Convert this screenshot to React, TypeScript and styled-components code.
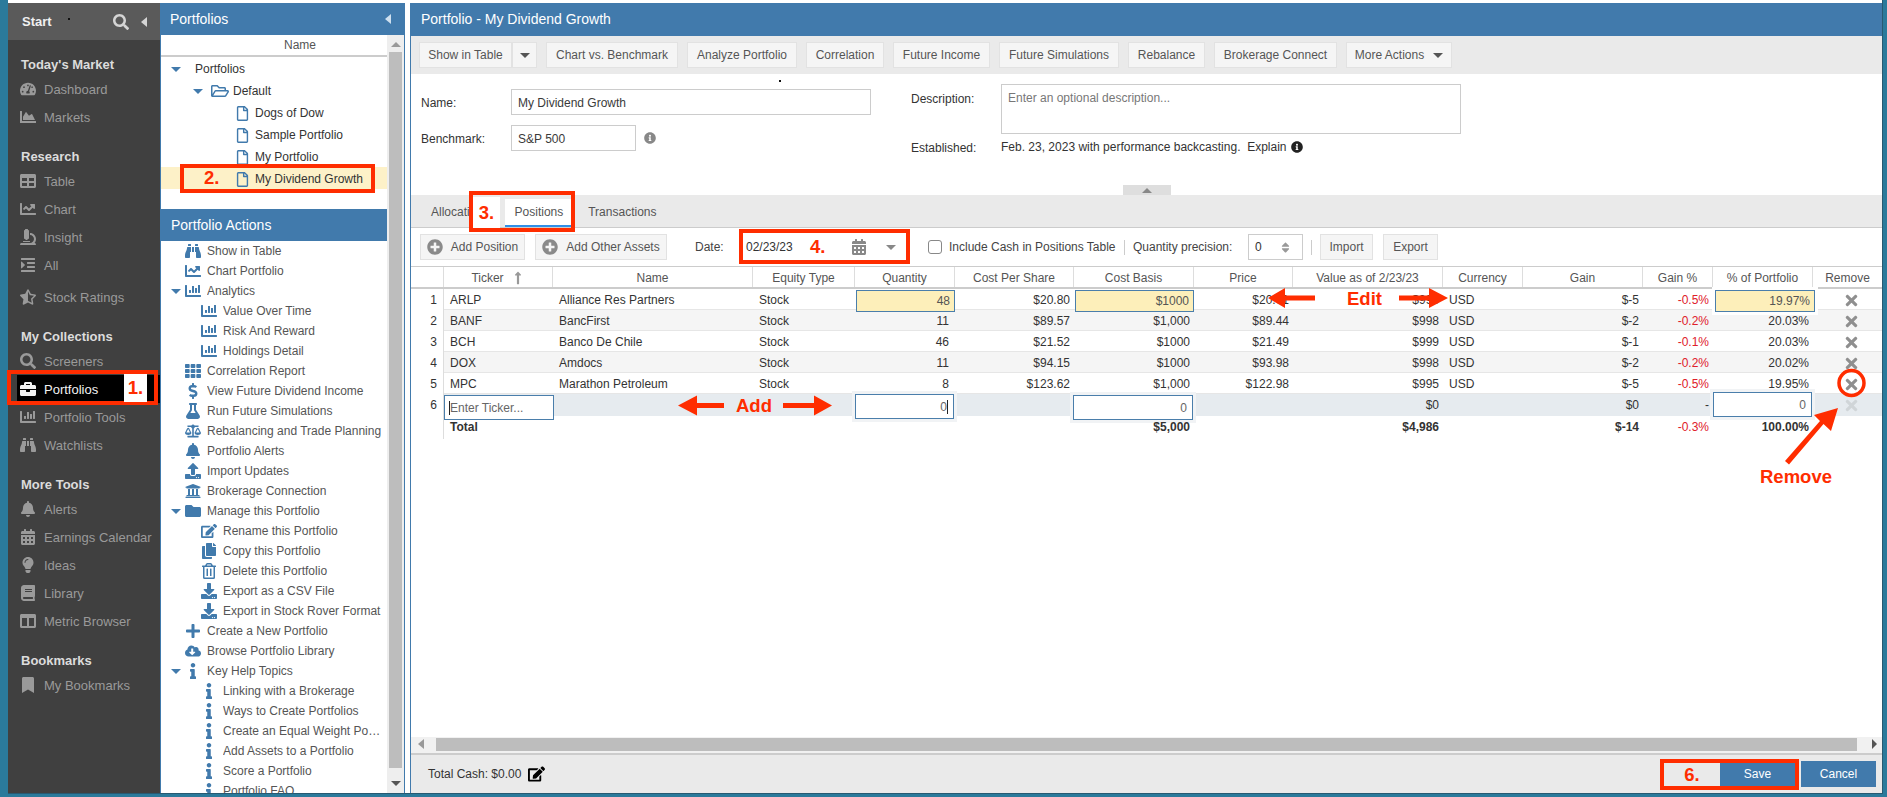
import React from "react";
import styled, { createGlobalStyle } from "styled-components";
import {
  FaBalanceScale,
  FaBell,
  FaBinoculars,
  FaBook,
  FaBookmark,
  FaBriefcase,
  FaCalendarAlt,
  FaChartArea,
  FaChartBar,
  FaChartLine,
  FaCloudDownloadAlt,
  FaColumns,
  FaCopy,
  FaDollarSign,
  FaDownload,
  FaEdit,
  FaFlask,
  FaFolder,
  FaIndent,
  FaInfo,
  FaInfoCircle,
  FaLightbulb,
  FaLongArrowAltUp,
  FaMicroscope,
  FaPlus,
  FaPlusCircle,
  FaRegFile,
  FaRegFolderOpen,
  FaRegTrashAlt,
  FaSearch,
  FaSort,
  FaStarHalfAlt,
  FaTable,
  FaTh,
  FaTachometerAlt,
  FaTimes,
  FaUniversity,
  FaUpload,
} from "react-icons/fa";

const BLUE = "#417aac";
const RED = "#ff2d00";

const GlobalStyle = createGlobalStyle`
  html, body {
    margin: 0;
    padding: 0;
    background: #2b7a9b;
  }
  * {
    box-sizing: border-box;
  }
`;

const Page = styled.div`
  position: relative;
  width: 1887px;
  height: 797px;
  overflow: hidden;
  background: #2b7a9b;
  font-family: "Liberation Sans", Arial, sans-serif;
  font-size: 12px;
  color: #333;
`;

const Frame = styled.div`
  display: flex;
  width: 1875px;
  height: 794px;
  margin-left: 8px;
  padding-top: 3px;
  background: #fff;
  border-right: 1px solid #285a72;
  border-bottom: 1px solid #285a72;
`;

/* left nav */
const Sidebar = styled.nav`
  width: 152px;
  flex: none;
  background: #404040;
`;

const SideHead = styled.div`
  display: flex;
  align-items: center;
  height: 37px;
  padding: 0 13px 0 14px;
  background: #5a5a5a;
  color: #f0f0f0;
  font-size: 13px;
  font-weight: bold;
  span {
    flex: 1;
  }
  svg {
    color: #d5d5d5;
  }
`;

const CaretLeft = styled.i<{ $color: string }>`
  display: block;
  width: 0;
  height: 0;
  margin-left: 12px;
  border-top: 5px solid transparent;
  border-bottom: 5px solid transparent;
  border-right: 6px solid ${(p) => p.$color};
`;

const SideBody = styled.div`
  padding-top: 13px;
`;

const SideSection = styled.section`
  margin-bottom: 14px;
`;

const SideTitle = styled.h3`
  height: 22px;
  margin: 0;
  padding-left: 13px;
  color: #dcdcdc;
  font-size: 13px;
  line-height: 23px;
`;

const SideItem = styled.div<{ $active?: boolean; $gapTop?: boolean }>`
  display: flex;
  align-items: center;
  height: 28px;
  margin-top: ${(p) => (p.$gapTop ? "4px" : "0")};
  margin-left: ${(p) => (p.$active ? "9px" : "0")};
  padding-left: ${(p) => (p.$active ? "3px" : "12px")};
  background: ${(p) => (p.$active ? "#000" : "transparent")};
  color: ${(p) => (p.$active ? "#f2f2f2" : "#9a9a9a")};
  font-size: 13px;
  svg {
    width: 16px;
    height: 16px;
    flex: none;
    margin-right: 8px;
  }
`;

/* tree panel */
const TreePanel = styled.aside`
  display: flex;
  flex-direction: column;
  width: 245px;
  flex: none;
  margin-right: 5px;
  border-left: 1px solid ${BLUE};
  border-right: 1px solid ${BLUE};
`;

const PanelTitle = styled.div`
  display: flex;
  align-items: center;
  justify-content: space-between;
  flex: none;
  height: 32px;
  padding: 0 14px 0 10px;
  background: ${BLUE};
  color: #fff;
  font-size: 14px;
`;

const PanelTitleLeft = styled(PanelTitle)`
  margin-left: -1px;
  margin-right: -1px;
`;

const TreeBody = styled.div`
  display: flex;
  flex: 1;
  min-height: 0;
`;

const TreeScroll = styled.div`
  flex: 1;
  min-width: 0;
  overflow: hidden;
`;

const NameHead = styled.div`
  height: 22px;
  padding-left: 52px;
  border-bottom: 2px solid #ccc;
  color: #555;
  line-height: 20px;
  text-align: center;
`;

const TreeRow = styled.div<{ $indent: number; $selected?: boolean }>`
  display: flex;
  align-items: center;
  height: 22px;
  padding-top: 2px;
  padding-left: ${(p) => p.$indent}px;
  background: ${(p) => (p.$selected ? "#fdf1c8" : "transparent")};
  color: #333;
`;

const Slot = styled.span<{ $w: number }>`
  display: flex;
  align-items: center;
  flex: none;
  width: ${(p) => p.$w}px;
  color: ${BLUE};
`;

const TreeArrow = styled.i`
  display: block;
  width: 0;
  height: 0;
  border-left: 5px solid transparent;
  border-right: 5px solid transparent;
  border-top: 5px solid ${BLUE};
`;

const ActionList = styled.div`
  margin-top: 20px;
`;

const ActionRow = styled.div<{ $level: number }>`
  display: flex;
  align-items: center;
  height: 20px;
  padding-left: ${(p) => 10 + p.$level * 16}px;
  color: #555;
  white-space: nowrap;
  span.label {
    width: ${(p) => (p.$level ? 160 : 176)}px;
    overflow: hidden;
    text-overflow: ellipsis;
  }
`;

const ActionIcon = styled.span`
  display: flex;
  align-items: center;
  justify-content: center;
  flex: none;
  width: 16px;
  height: 16px;
  margin-right: 6px;
  color: ${BLUE};
  svg {
    width: 16px;
    height: 16px;
  }
`;

const VScroll = styled.div`
  display: flex;
  flex-direction: column;
  align-items: center;
  width: 17px;
  flex: none;
  background: #eeeeee;
`;

const VThumb = styled.div`
  width: 13px;
  height: 716px;
  background: #bdbdbd;
`;

const ArrowUp = styled.i<{ $color: string; $my?: string }>`
  display: block;
  width: 0;
  height: 0;
  margin: ${(p) => p.$my || "0"};
  border-left: 5px solid transparent;
  border-right: 5px solid transparent;
  border-bottom: 5px solid ${(p) => p.$color};
`;

const ArrowDown = styled.i<{ $color: string; $my?: string }>`
  display: block;
  width: 0;
  height: 0;
  margin: ${(p) => p.$my || "0"};
  border-left: 5px solid transparent;
  border-right: 5px solid transparent;
  border-top: 5px solid ${(p) => p.$color};
`;

/* main panel */
const Main = styled.main`
  display: flex;
  flex-direction: column;
  flex: 1;
  min-width: 0;
  border-left: 1px solid ${BLUE};
`;

const MainTitle = styled.div`
  flex: none;
  height: 33px;
  margin-left: -1px;
  padding-left: 11px;
  background: ${BLUE};
  color: #fff;
  font-size: 14px;
  line-height: 33px;
`;

const ActionBar = styled.div`
  display: flex;
  align-items: center;
  flex: none;
  gap: 9px;
  height: 38px;
  padding-left: 8px;
  background: #eaeaea;
`;

const BarGroup = styled.div`
  display: flex;
`;

const Btn = styled.button<{ $ml?: number; $w: number }>`
  display: flex;
  align-items: center;
  justify-content: center;
  flex: none;
  width: ${(p) => p.$w}px;
  height: 26px;
  margin-left: ${(p) => p.$ml || 0}px;
  padding: 0;
  background: #f5f5f5;
  border: 1px solid #e2e2e2;
  color: #555;
  font: inherit;
  white-space: nowrap;
`;

const Form = styled.div`
  position: relative;
  display: flex;
  flex: none;
  height: 121px;
  padding-left: 10px;
`;

const FormLeft = styled.div`
  width: 490px;
  flex: none;
  padding-top: 15px;
`;

const FormRow = styled.div`
  display: flex;
  align-items: center;
  height: 26px;
  margin-bottom: 10px;
`;

const FormLabel = styled.label<{ $w: number }>`
  flex: none;
  width: ${(p) => p.$w}px;
  padding-top: 2px;
  color: #333;
`;

const TextField = styled.div<{ $w: number }>`
  display: flex;
  align-items: center;
  flex: none;
  width: ${(p) => p.$w}px;
  height: 26px;
  padding: 2px 0 0 6px;
  border: 1px solid #ccc;
  color: #3a3a3a;
`;

const FormRight = styled.div`
  padding-top: 10px;
`;

const DescRow = styled.div`
  display: flex;
  height: 50px;
  margin-bottom: 5px;
  line-height: 26px;
`;

const DescBox = styled.div`
  width: 460px;
  height: 50px;
  padding: 0 6px;
  border: 1px solid #ccc;
  color: #777;
  line-height: 26px;
`;

const EstablishedRow = styled.div`
  display: flex;
  align-items: center;
  height: 16px;
  margin-top: 1px;
`;

const InfoIcon = styled(FaInfoCircle)<{ $color: string; $ml: number }>`
  width: 12px;
  height: 12px;
  margin-left: ${(p) => p.$ml}px;
  color: ${(p) => p.$color};
`;

const CollapseTab = styled.div`
  position: absolute;
  left: 712px;
  bottom: 0;
  display: flex;
  align-items: center;
  justify-content: center;
  width: 48px;
  height: 10px;
  background: #dedede;
`;

const TabBar = styled.div`
  display: flex;
  align-items: flex-end;
  flex: none;
  gap: 5px;
  height: 33px;
  padding-left: 10px;
  background: #eaeaea;
  border-bottom: 1px solid #ccc;
`;

const Tab = styled.div<{ $active?: boolean; $mr?: number }>`
  height: 28px;
  margin-right: ${(p) => p.$mr || 0}px;
  padding: 0 10px;
  background: ${(p) => (p.$active ? "#fff" : "transparent")};
  border-bottom: 2px solid ${(p) => (p.$active ? "#2f8fe8" : "transparent")};
  color: #555;
  line-height: 26px;
`;

const PosBar = styled.div`
  display: flex;
  align-items: center;
  flex: none;
  height: 38px;
  padding-left: 9px;
`;

const PlusIcon = styled(FaPlusCircle)`
  width: 16px;
  height: 16px;
  margin-right: 8px;
  color: #8a8a8a;
`;

const PlainText = styled.span<{ $ml?: number; $w?: number }>`
  flex: none;
  width: ${(p) => (p.$w ? `${p.$w}px` : "auto")};
  margin-left: ${(p) => p.$ml || 0}px;
  color: #444;
  white-space: nowrap;
`;

const DateField = styled.div`
  display: flex;
  align-items: center;
  flex: none;
  width: 173px;
  height: 26px;
  margin-left: 10px;
  padding-left: 13px;
  color: #333;
  svg {
    width: 14px;
    height: 16px;
    margin-left: 59px;
    color: #888;
  }
`;

const Check = styled.i`
  display: block;
  flex: none;
  width: 14px;
  height: 14px;
  margin-left: 22px;
  border: 1px solid #888;
  border-radius: 3px;
`;

const BarSep = styled.i<{ $ml: number; $mr: number }>`
  display: block;
  flex: none;
  width: 1px;
  height: 15px;
  margin: 0 ${(p) => p.$mr}px 0 ${(p) => p.$ml}px;
  background: #ccc;
`;

const Spinner = styled.div`
  display: flex;
  align-items: center;
  justify-content: space-between;
  flex: none;
  width: 55px;
  height: 26px;
  margin-left: 16px;
  padding: 0 10px 0 6px;
  border: 1px solid #ccc;
  color: #333;
  svg {
    color: #999;
    font-size: 13px;
  }
`;

/* positions table */
const TableArea = styled.div`
  flex: 1;
  min-height: 0;
`;

const COLS = "33px 109px 200px 102px 100px 119px 120px 99px 150px 80px 120px 70px 100px 69px";

const HeadRow = styled.div`
  display: grid;
  grid-template-columns: ${COLS};
  height: 23px;
  border-top: 1px solid #ccc;
  border-bottom: 2px solid #ccc;
`;

const HeadCell = styled.div`
  display: flex;
  align-items: center;
  justify-content: center;
  padding-top: 2px;
  border-right: 1px solid #ddd;
  color: #555;
  svg {
    margin-left: 7px;
    color: #999;
    font-size: 14px;
  }
  &:last-child {
    border-right: none;
  }
`;

const BodyRow = styled.div<{ $bg: string; $h?: number }>`
  display: grid;
  grid-template-columns: ${COLS};
  height: ${(p) => p.$h || 21}px;
  background: ${(p) => p.$bg};
  border-bottom: ${(p) => (p.$h === 22 ? "none" : "1px solid #e6e6e6")};
`;

const IndexCell = styled.div`
  padding-right: 6px;
  background: #fff;
  border-right: 1px solid #ddd;
  color: #333;
  line-height: 23px;
  text-align: right;
`;

const Cell = styled.div<{
  $right?: boolean;
  $pr?: number;
  $color?: string;
  $bold?: boolean;
}>`
  position: relative;
  padding: ${(p) => (p.$right ? `0 ${p.$pr ?? 4}px 0 0` : "0 0 0 6px")};
  color: ${(p) => p.$color || "#333"};
  font-weight: ${(p) => (p.$bold ? "bold" : "normal")};
  line-height: 23px;
  text-align: ${(p) => (p.$right ? "right" : "left")};
`;

const EditedValue = styled.div<{ $halo?: boolean }>`
  position: absolute;
  top: 1px;
  left: ${(p) => (p.$halo ? 2 : 1)}px;
  right: ${(p) => (p.$halo ? -2 : 0)}px;
  bottom: 0;
  padding-right: 4px;
  background: #fdefba;
  border: 1px solid #4a7eab;
  box-shadow: ${(p) => (p.$halo ? "0 0 0 3px #fff" : "none")};
  color: #555;
  line-height: 20px;
  text-align: right;
`;

const CellInput = styled.div<{ $top: number; $left: number; $right: number; $alignLeft?: boolean }>`
  position: absolute;
  top: ${(p) => p.$top}px;
  left: ${(p) => p.$left}px;
  right: ${(p) => p.$right}px;
  height: 25px;
  padding: ${(p) => (p.$alignLeft ? "0 0 0 4px" : "0 5px 0 0")};
  background: #fff;
  border: 1px solid #4a7eab;
  box-shadow: ${(p) => (p.$alignLeft ? "none" : "0 0 0 3px #f1f3f5")};
  color: #666;
  line-height: 25px;
  text-align: ${(p) => (p.$alignLeft ? "left" : "right")};
`;

const TextCaret = styled.i`
  display: inline-block;
  width: 1px;
  height: 14px;
  background: #222;
  vertical-align: -3px;
`;

const RemoveCell = styled.div<{ $faded?: boolean }>`
  display: flex;
  align-items: center;
  justify-content: center;
  padding-left: 7px;
  color: ${(p) => (p.$faded ? "#d0d5d8" : "#8f8f8f")};
  svg {
    width: 15px;
    height: 17px;
  }
`;

const HScroll = styled.div`
  display: flex;
  align-items: center;
  flex: none;
  height: 18px;
  padding: 0 5px 2px 7px;
  background: #f1f1f1;
  border-bottom: 2px solid #ccc;
`;

const HThumb = styled.div`
  flex: 1;
  height: 13px;
  margin: 0 15px 0 12px;
  background: #bdbdbd;
`;

const ArrowRight = styled.i`
  display: block;
  width: 0;
  height: 0;
  border-top: 5px solid transparent;
  border-bottom: 5px solid transparent;
  border-left: 5px solid #555;
`;

const Footer = styled.div`
  display: flex;
  align-items: center;
  justify-content: space-between;
  flex: none;
  height: 38px;
  padding: 0 6px 0 17px;
  background: #eaeaea;
`;

const CashInfo = styled.div`
  display: flex;
  align-items: center;
  color: #333;
  svg {
    width: 17px;
    height: 16px;
    margin-left: 7px;
    color: #000;
  }
`;

const FooterBtns = styled.div`
  display: flex;
  gap: 6px;
`;

const PrimaryBtn = styled.button`
  width: 75px;
  height: 26px;
  background: ${BLUE};
  border: none;
  color: #fff;
  font: inherit;
`;

/* red marks drawn on top of the screenshot */
const RedBox = styled.div<{ $x: number; $y: number; $w: number; $h: number }>`
  position: absolute;
  left: ${(p) => p.$x}px;
  top: ${(p) => p.$y}px;
  width: ${(p) => p.$w}px;
  height: ${(p) => p.$h}px;
  border: 4px solid ${RED};
`;

const RedText = styled.div<{ $x: number; $y: number; $bg?: string; $w?: number; $h?: number }>`
  position: absolute;
  left: ${(p) => p.$x}px;
  top: ${(p) => p.$y}px;
  width: ${(p) => (p.$w ? `${p.$w}px` : "auto")};
  height: ${(p) => (p.$h ? `${p.$h}px` : "auto")};
  background: ${(p) => p.$bg || "transparent"};
  color: ${RED};
  font-size: 18.5px;
  font-weight: bold;
  line-height: ${(p) => (p.$h ? `${p.$h}px` : "22px")};
  text-align: ${(p) => (p.$w ? "center" : "left")};
  white-space: nowrap;
`;

const MarkLayer = styled.svg`
  position: absolute;
  inset: 0;
  pointer-events: none;
`;

const Speck = styled.i<{ $x: number; $y: number }>`
  position: absolute;
  left: ${(p) => p.$x}px;
  top: ${(p) => p.$y}px;
  width: 2px;
  height: 2px;
  background: #111;
`;

const sections = [
  {
    title: "Today's Market",
    items: [
      { label: "Dashboard", icon: <FaTachometerAlt /> },
      { label: "Markets", icon: <FaChartArea /> },
    ],
  },
  {
    title: "Research",
    items: [
      { label: "Table", icon: <FaTable /> },
      { label: "Chart", icon: <FaChartLine /> },
      { label: "Insight", icon: <FaMicroscope /> },
      { label: "All", icon: <FaIndent /> },
      { label: "Stock Ratings", icon: <FaStarHalfAlt />, gapTop: true },
    ],
  },
  {
    title: "My Collections",
    items: [
      { label: "Screeners", icon: <FaSearch /> },
      { label: "Portfolios", icon: <FaBriefcase />, active: true },
      { label: "Portfolio Tools", icon: <FaChartBar /> },
      { label: "Watchlists", icon: <FaBinoculars /> },
    ],
  },
  {
    title: "More Tools",
    items: [
      { label: "Alerts", icon: <FaBell /> },
      { label: "Earnings Calendar", icon: <FaCalendarAlt /> },
      { label: "Ideas", icon: <FaLightbulb /> },
      { label: "Library", icon: <FaBook /> },
      { label: "Metric Browser", icon: <FaColumns /> },
    ],
  },
  {
    title: "Bookmarks",
    items: [{ label: "My Bookmarks", icon: <FaBookmark /> }],
  },
];

const actions = [
  { label: "Show in Table", icon: <FaBinoculars />, level: 0 },
  { label: "Chart Portfolio", icon: <FaChartLine />, level: 0 },
  { label: "Analytics", icon: <FaChartBar />, level: 0, open: true },
  { label: "Value Over Time", icon: <FaChartBar />, level: 1 },
  { label: "Risk And Reward", icon: <FaChartBar />, level: 1 },
  { label: "Holdings Detail", icon: <FaChartBar />, level: 1 },
  { label: "Correlation Report", icon: <FaTh />, level: 0 },
  { label: "View Future Dividend Income", icon: <FaDollarSign />, level: 0 },
  { label: "Run Future Simulations", icon: <FaFlask />, level: 0 },
  { label: "Rebalancing and Trade Planning", icon: <FaBalanceScale />, level: 0 },
  { label: "Portfolio Alerts", icon: <FaBell />, level: 0 },
  { label: "Import Updates", icon: <FaUpload />, level: 0 },
  { label: "Brokerage Connection", icon: <FaUniversity />, level: 0 },
  { label: "Manage this Portfolio", icon: <FaFolder />, level: 0, open: true },
  { label: "Rename this Portfolio", icon: <FaEdit />, level: 1 },
  { label: "Copy this Portfolio", icon: <FaCopy />, level: 1 },
  { label: "Delete this Portfolio", icon: <FaRegTrashAlt />, level: 1 },
  { label: "Export as a CSV File", icon: <FaDownload />, level: 1 },
  { label: "Export in Stock Rover Format", icon: <FaDownload />, level: 1 },
  { label: "Create a New Portfolio", icon: <FaPlus />, level: 0 },
  { label: "Browse Portfolio Library", icon: <FaCloudDownloadAlt />, level: 0 },
  { label: "Key Help Topics", icon: <FaInfo />, level: 0, open: true },
  { label: "Linking with a Brokerage", icon: <FaInfo />, level: 1 },
  { label: "Ways to Create Portfolios", icon: <FaInfo />, level: 1 },
  { label: "Create an Equal Weight Portfolio", icon: <FaInfo />, level: 1 },
  { label: "Add Assets to a Portfolio", icon: <FaInfo />, level: 1 },
  { label: "Score a Portfolio", icon: <FaInfo />, level: 1 },
  { label: "Portfolio FAQ", icon: <FaInfo />, level: 1 },
];

const headers = [
  "",
  "Ticker",
  "Name",
  "Equity Type",
  "Quantity",
  "Cost Per Share",
  "Cost Basis",
  "Price",
  "Value as of 2/23/23",
  "Currency",
  "Gain",
  "Gain %",
  "% of Portfolio",
  "Remove",
];

const positions = [
  ["ARLP", "Alliance Res Partners", "48", "$20.80", "$1000", "$20.71", "$995", "$-5", "-0.5%", "19.97%"],
  ["BANF", "BancFirst", "11", "$89.57", "$1,000", "$89.44", "$998", "$-2", "-0.2%", "20.03%"],
  ["BCH", "Banco De Chile", "46", "$21.52", "$1000", "$21.49", "$999", "$-1", "-0.1%", "20.03%"],
  ["DOX", "Amdocs", "11", "$94.15", "$1000", "$93.98", "$998", "$-2", "-0.2%", "20.02%"],
  ["MPC", "Marathon Petroleum", "8", "$123.62", "$1,000", "$122.98", "$995", "$-5", "-0.5%", "19.95%"],
];

const App = () => {
  return (
    <Page>
      <GlobalStyle />
      <Frame>
        <Sidebar>
          <SideHead>
            <span>Start</span>
            <FaSearch size={16} />
            <CaretLeft $color="#d5d5d5" />
          </SideHead>
          <SideBody>
            {sections.map((s) => (
              <SideSection key={s.title}>
                <SideTitle>{s.title}</SideTitle>
                {s.items.map((it: any) => (
                  <SideItem key={it.label} $active={it.active} $gapTop={it.gapTop}>
                    {it.icon}
                    {it.label}
                  </SideItem>
                ))}
              </SideSection>
            ))}
          </SideBody>
        </Sidebar>

        <TreePanel>
          <PanelTitleLeft>
            Portfolios
            <CaretLeft $color="#cfe0ef" />
          </PanelTitleLeft>
          <TreeBody>
            <TreeScroll>
              <NameHead>Name</NameHead>
              <TreeRow $indent={10}>
                <Slot $w={24}>
                  <TreeArrow />
                </Slot>
                Portfolios
              </TreeRow>
              <TreeRow $indent={32}>
                <Slot $w={18}>
                  <TreeArrow />
                </Slot>
                <Slot $w={22}>
                  <FaRegFolderOpen size={18} />
                </Slot>
                Default
              </TreeRow>
              {["Dogs of Dow", "Sample Portfolio", "My Portfolio", "My Dividend Growth"].map((name) => (
                <TreeRow key={name} $indent={74} $selected={name === "My Dividend Growth"}>
                  <Slot $w={20}>
                    <FaRegFile size={15} />
                  </Slot>
                  {name}
                </TreeRow>
              ))}
              <ActionList>
                <PanelTitle>Portfolio Actions</PanelTitle>
                {actions.map((a) => (
                  <ActionRow key={a.label} $level={a.level}>
                    <Slot $w={14}>{a.open && <TreeArrow />}</Slot>
                    <ActionIcon>{a.icon}</ActionIcon>
                    <span className="label">{a.label}</span>
                  </ActionRow>
                ))}
              </ActionList>
            </TreeScroll>
            <VScroll>
              <ArrowUp $color="#999" $my="7px 0 5px" />
              <VThumb />
              <ArrowDown $color="#555" $my="13px 0 0" />
            </VScroll>
          </TreeBody>
        </TreePanel>

        <Main>
          <MainTitle>Portfolio - My Dividend Growth</MainTitle>
          <ActionBar>
            <BarGroup>
              <Btn $w={93}>Show in Table</Btn>
              <Btn $w={25}>
                <ArrowDown $color="#555" />
              </Btn>
            </BarGroup>
            <Btn $w={132}>Chart vs. Benchmark</Btn>
            <Btn $w={110}>Analyze Portfolio</Btn>
            <Btn $w={78}>Correlation</Btn>
            <Btn $w={97}>Future Income</Btn>
            <Btn $w={120}>Future Simulations</Btn>
            <Btn $w={77}>Rebalance</Btn>
            <Btn $w={123}>Brokerage Connect</Btn>
            <Btn $w={106}>
              More Actions
              <ArrowDown $color="#555" $my="0 0 0 9px" />
            </Btn>
          </ActionBar>

          <Form>
            <FormLeft>
              <FormRow>
                <FormLabel $w={90}>Name:</FormLabel>
                <TextField $w={360}>My Dividend Growth</TextField>
              </FormRow>
              <FormRow>
                <FormLabel $w={90}>Benchmark:</FormLabel>
                <TextField $w={125}>S&amp;P 500</TextField>
                <InfoIcon $color="#888" $ml={8} />
              </FormRow>
            </FormLeft>
            <FormRight>
              <DescRow>
                <FormLabel $w={90}>Description:</FormLabel>
                <DescBox>Enter an optional description...</DescBox>
              </DescRow>
              <EstablishedRow>
                <FormLabel $w={90}>Established:</FormLabel>
                Feb. 23, 2023 with performance backcasting.&nbsp; Explain
                <InfoIcon $color="#222" $ml={4} />
              </EstablishedRow>
            </FormRight>
            <CollapseTab>
              <ArrowUp $color="#888" />
            </CollapseTab>
          </Form>

          <TabBar>
            <Tab $mr={6.5}>Allocation</Tab>
            <Tab $active>Positions</Tab>
            <Tab>Transactions</Tab>
          </TabBar>

          <PosBar>
            <Btn $w={105}>
              <PlusIcon />
              Add Position
            </Btn>
            <Btn $w={132} $ml={10}>
              <PlusIcon />
              Add Other Assets
            </Btn>
            <PlainText $ml={28} $w={28}>
              Date:
            </PlainText>
            <DateField>
              02/23/23
              <FaCalendarAlt />
              <ArrowDown $color="#888" $my="0 0 0 20px" />
            </DateField>
            <Check />
            <PlainText $ml={7} $w={167}>
              Include Cash in Positions Table
            </PlainText>
            <BarSep $ml={8} $mr={8} />
            <PlainText $w={99}>Quantity precision:</PlainText>
            <Spinner>
              0
              <FaSort />
            </Spinner>
            <BarSep $ml={8} $mr={8} />
            <Btn $w={53}>Import</Btn>
            <Btn $w={55} $ml={10}>
              Export
            </Btn>
          </PosBar>

          <TableArea>
            <HeadRow>
              {headers.map((h) => (
                <HeadCell key={h || "index"}>
                  {h}
                  {h === "Ticker" && <FaLongArrowAltUp />}
                </HeadCell>
              ))}
            </HeadRow>
            {positions.map((p, i) => (
              <BodyRow key={p[0]} $bg={i % 2 ? "#f5f5f5" : "#fff"}>
                <IndexCell>{i + 1}</IndexCell>
                <Cell>{p[0]}</Cell>
                <Cell>{p[1]}</Cell>
                <Cell>Stock</Cell>
                <Cell $right $pr={6}>
                  {i === 0 ? <EditedValue>{p[2]}</EditedValue> : p[2]}
                </Cell>
                <Cell $right>{p[3]}</Cell>
                <Cell $right>{i === 0 ? <EditedValue>{p[4]}</EditedValue> : p[4]}</Cell>
                <Cell $right>{p[5]}</Cell>
                <Cell $right>{p[6]}</Cell>
                <Cell>{"USD"}</Cell>
                <Cell $right>{p[7]}</Cell>
                <Cell $right $color="#e0202a">
                  {p[8]}
                </Cell>
                <Cell $right>{i === 0 ? <EditedValue $halo>{p[9]}</EditedValue> : p[9]}</Cell>
                <RemoveCell>
                  <FaTimes />
                </RemoveCell>
              </BodyRow>
            ))}
            <BodyRow $bg="#e6ebef" $h={22}>
              <IndexCell>6</IndexCell>
              <Cell>
                <CellInput $top={1} $left={0} $right={-1} $alignLeft>
                  <TextCaret />
                  Enter Ticker...
                </CellInput>
              </Cell>
              <Cell />
              <Cell />
              <Cell>
                <CellInput $top={0} $left={0} $right={1}>
                  0
                  <TextCaret />
                </CellInput>
              </Cell>
              <Cell />
              <Cell>
                <CellInput $top={1} $left={-1} $right={1}>
                  0
                </CellInput>
              </Cell>
              <Cell />
              <Cell $right>$0</Cell>
              <Cell />
              <Cell $right>$0</Cell>
              <Cell $right $color="#333">
                -
              </Cell>
              <Cell>
                <CellInput $top={-2} $left={0} $right={1}>
                  0
                </CellInput>
              </Cell>
              <RemoveCell $faded>
                <FaTimes />
              </RemoveCell>
            </BodyRow>
            <BodyRow $bg="#fff" $h={22}>
              <IndexCell />
              <Cell $bold>Total</Cell>
              <Cell />
              <Cell />
              <Cell />
              <Cell />
              <Cell $right $bold>
                $5,000
              </Cell>
              <Cell />
              <Cell $right $bold>
                $4,986
              </Cell>
              <Cell />
              <Cell $right $bold>
                $-14
              </Cell>
              <Cell $right $color="#e0202a">
                -0.3%
              </Cell>
              <Cell $right $bold>
                100.00%
              </Cell>
              <Cell />
            </BodyRow>
          </TableArea>

          <HScroll>
            <CaretLeft $color="#999" style={{ margin: 0 }} />
            <HThumb />
            <ArrowRight />
          </HScroll>

          <Footer>
            <CashInfo>
              Total Cash: $0.00
              <FaEdit />
            </CashInfo>
            <FooterBtns>
              <PrimaryBtn>Save</PrimaryBtn>
              <PrimaryBtn>Cancel</PrimaryBtn>
            </FooterBtns>
          </Footer>
        </Main>
      </Frame>

      <Speck $x={68} $y={18} />
      <Speck $x={779} $y={80} />

      <RedBox $x={7} $y={370} $w={151} $h={35} />
      <RedText $x={124} $y={374} $w={23} $h={28} $bg="#fff">
        1.
      </RedText>
      <RedBox $x={180} $y={164} $w={195} $h={29} />
      <RedText $x={204} $y={167}>
        2.
      </RedText>
      <RedBox $x={469} $y={191} $w={106} $h={41} />
      <RedText $x={473} $y={197} $w={27} $h={31} $bg="#fff">
        3.
      </RedText>
      <RedBox $x={739} $y={229} $w={171} $h={35} />
      <RedText $x={810} $y={236}>
        4.
      </RedText>
      <RedBox $x={1660} $y={759} $w={139} $h={31} />
      <RedText $x={1664} $y={763} $w={56} $h={23} $bg="#eaeaea">
        6.
      </RedText>
      <RedText $x={736} $y={395}>
        Add
      </RedText>
      <RedText $x={1347} $y={288}>
        Edit
      </RedText>
      <RedText $x={1760} $y={466}>
        Remove
      </RedText>

      <MarkLayer width={1887} height={797} viewBox="0 0 1887 797">
        <g fill={RED}>
          <polygon points="678,405.5 697,395.5 697,403 724,403 724,408 697,408 697,415.5" />
          <polygon points="832,405.5 814,395.5 814,403 783,403 783,408 814,408 814,415.5" />
          <polygon points="1268,298 1285,288 1285,295.5 1315,295.5 1315,300.5 1285,300.5 1285,308" />
          <polygon points="1448,298 1429,288 1429,295.5 1399,295.5 1399,300.5 1429,300.5 1429,308" />
          <polygon points="1838,408 1831,431 1823.5,424 1789,464.5 1785,461 1820,421 1814,415" />
        </g>
        <circle cx={1851.5} cy={383} r={12.5} fill="none" stroke={RED} strokeWidth={3.5} />
      </MarkLayer>
    </Page>
  );
};

export default App;
